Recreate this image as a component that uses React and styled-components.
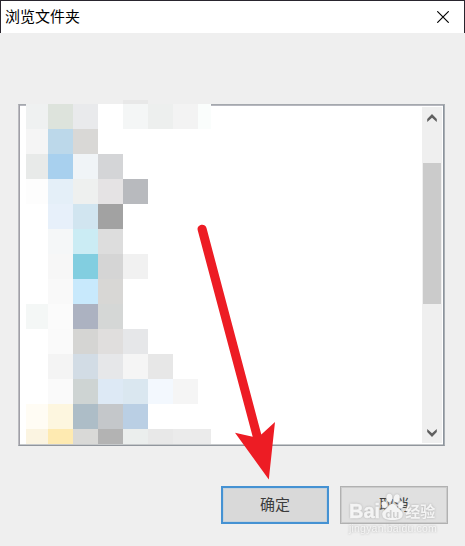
import styled, { createGlobalStyle } from "styled-components";

const MOSAIC = [
  ["#eff1f1", "#dde3dc", "#e9eaec", "#fff", "#f4f6f6", "#edefee", "#f3f3f3", "#fafdfc"],
  ["#f5f5f5", "#bcd8ea", "#d9d8d6"],
  ["#e8eae9", "#a8d0ee", "#f0f4f7", "#d4d5d7"],
  ["#fdfdfd", "#e4eff8", "#eef0ef", "#e5e3e4", "#b8babe"],
  [null, "#e7f0fa", "#d1e5f0", "#a2a2a2"],
  [null, "#f5f7f8", "#cbecf4", "#dddddd"],
  [null, "#f7f7f7", "#82cee0", "#d5d5d5", "#f1f1f1"],
  [null, "#f9f9f9", "#c8e9fc", "#d8d7d5"],
  ["#f4f7f6", "#fbfbfb", "#acb2c1", "#d5d7d6"],
  [null, "#fafafa", "#d5d5d3", "#e0dedd", "#e6e7e9"],
  [null, "#f4f4f4", "#d2dce5", "#e6e7e9", "#f5f5f5", "#e7e7e7"],
  [null, "#fafafa", "#ced4d3", "#dde9f5", "#dae7f0", "#f3f8fe", "#f5f5f5"],
  ["#fffcf4", "#fdf6df", "#adbdc7", "#c4c7ca", "#bacfe4"],
  ["#fbf4e1", "#feeab1", "#d9d9d7", "#b3b3b3", "#ebeeed", "#e8e8e8", "#ebebeb", "#ebebeb"],
];

export default function App() {
  return (
    <>
      <GlobalStyle />
      <Dialog>
        <TitleBar>
          <Title>浏览文件夹</Title>
          <CloseButton aria-label="关闭">
            <svg width="12" height="12" viewBox="0 0 12 12">
              <path d="M.3 .3 11.7 11.7M11.7 .3.3 11.7" stroke="#000" strokeWidth="1.15" />
            </svg>
          </CloseButton>
        </TitleBar>
        <Body>
          <FolderTree>
            <Mosaic>
              {MOSAIC.map((row, y) =>
                row.map((color, x) =>
                  color && <Block key={`${x}-${y}`} $color={color} $col={x + 1} $row={y + 1} />
                )
              )}
              <Sliver />
            </Mosaic>
            <ScrollBar>
              <Chevron />
              <Thumb />
              <Chevron $down />
            </ScrollBar>
          </FolderTree>
          <Actions>
            <Button $primary>确定</Button>
            <Button>
              取消
              <Watermark />
            </Button>
          </Actions>
        </Body>
        <Arrow width="465" height="546" viewBox="0 0 465 546">
          <path
            d="M197.7 230.3C196.3 224.5 205 222.5 206.5 228L261.3 434.5 275 422 268.8 479.5 235 432.8 252.7 436.7Z"
            fill="#ed1c24"
          />
        </Arrow>
      </Dialog>
    </>
  );
}

function Chevron({ $down }) {
  return (
    <ChevronBox $down={$down}>
      <svg width="10" height="8" viewBox="0 0 10 8">
        <path d="M5 0 9.8 4.9V8L5 3.8.2 8V4.9Z" fill="#606060" />
      </svg>
    </ChevronBox>
  );
}

function Watermark() {
  return (
    <Mark>
      <Brand>
        <span>Bai</span>
        <Paw width="23" height="28" viewBox="0 0 22 29" preserveAspectRatio="none">
          <g fill="currentColor">
            <ellipse cx="3.2" cy="12" rx="2.5" ry="3.5" transform="rotate(-12 3.2 12)" />
            <ellipse cx="8" cy="5" rx="2.8" ry="4.3" />
            <ellipse cx="15" cy="5.5" rx="2.8" ry="4.2" transform="rotate(8 15 5.5)" />
            <ellipse cx="19" cy="12.5" rx="2.5" ry="3.5" transform="rotate(10 19 12.5)" />
            <path d="M11 11.5c3 0 3.6 2.5 5.7 4.6 2.2 2.1 4.4 3.1 4.1 6.5-.3 4-3.5 5.4-9.8 5.4S1.5 26.6 1.2 22.6c-.3-3.4 1.9-4.4 4.1-6.5C7.4 14 8 11.5 11 11.5Z" />
          </g>
          <text x="4" y="25.5" fontFamily="Liberation Sans, sans-serif" fontWeight="700" fontSize="11" fill="#cfcfcf">
            du
          </text>
        </Paw>
        <Experience>经验</Experience>
      </Brand>
      <Domain>jingyan.baidu.com</Domain>
    </Mark>
  );
}

const GlobalStyle = createGlobalStyle`
  * {
    box-sizing: border-box;
  }

  body {
    margin: 0;
    overflow: hidden;
    font-family: "Noto Sans CJK SC", sans-serif;
  }
`;

const Dialog = styled.div`
  position: relative;
  display: flex;
  flex-direction: column;
  width: 465px;
  height: 546px;
  background: #efefef;
`;

const TitleBar = styled.header`
  display: flex;
  align-items: center;
  justify-content: space-between;
  height: 33px;
  padding: 0 15px 0 4px;
  border: 1px solid #29252e;
  border-bottom: 0;
  background: #fff;
`;

const Title = styled.h1`
  margin: 0;
  padding-bottom: 2px;
  font-size: 15px;
  font-weight: 400;
  line-height: 30px;
  color: #000;
`;

const CloseButton = styled.button`
  display: flex;
  padding: 0;
  border: 0;
  background: none;
`;

const Body = styled.main`
  display: flex;
  flex-direction: column;
  gap: 40px;
  padding: 71px 17px 0 18px;
`;

const FolderTree = styled.section`
  position: relative;
  display: flex;
  justify-content: flex-end;
  width: 427px;
  height: 342px;
  padding-right: 1px;
  border: 1px solid;
  border-color: #a4a8ad #a9aeb3 #91969d #bbbbc0;
  background: #fff;
  box-shadow: inset 1px 0 #a09fa7, inset -1px 0 #8c949d, inset 0 1px #b6b7bf,
    inset 0 -1px #c6c9cb;
`;

// Covers the folder names, including part of the frame's top edge
const Mosaic = styled.div`
  position: absolute;
  top: -1px;
  left: 7px;
  display: grid;
  grid-template-columns: 22px repeat(6, 25px) 13px;
  grid-template-rows: repeat(13, 25px) 15px;
  background: #fff;
`;

const Block = styled.div`
  grid-column: ${(p) => p.$col};
  grid-row: ${(p) => p.$row};
  background: ${(p) => p.$color};
`;

const Sliver = styled.div`
  position: absolute;
  top: -4px;
  left: 97px;
  width: 25px;
  height: 4px;
  background: #e8e8e8;
`;

const ScrollBar = styled.div`
  display: flex;
  flex-direction: column;
  width: 20px;
  margin: 2px 1px 2px 0;
  padding: 0 1px;
  background: #efefef;
`;

const ChevronBox = styled.div`
  display: flex;
  flex: none;
  justify-content: center;
  padding-top: ${(p) => (p.$down ? 6 : 7)}px;
  transform: ${(p) => (p.$down ? "rotate(180deg)" : "none")};
`;

const Thumb = styled.div`
  flex: none;
  height: 141px;
  margin: 41px 0 125px;
  background: #cbcbcb;
`;

const Actions = styled.footer`
  display: flex;
  justify-content: flex-end;
  gap: 11px;
`;

const Button = styled.button`
  position: relative;
  width: 108px;
  height: 38px;
  padding: 0 0 2px;
  border: ${(p) => (p.$primary ? "2px solid #4592d3" : "1px solid #b1b1b1")};
  background: ${(p) => (p.$primary ? "#d9d9d9" : "#e0e0e0")};
  box-shadow: inset 0 0 0 1px ${(p) => (p.$primary ? "#c5d2dc" : "#cbcbcb")};
  font-family: inherit;
  font-size: 15px;
  line-height: 32px;
  color: #3c3c3c;
`;

const Mark = styled.div`
  position: absolute;
  top: 6px;
  left: 8px;
  display: flex;
  flex-direction: column;
  white-space: nowrap;
  color: #f4f4f4;
  filter: drop-shadow(0 0 0.8px #b0b0b0);
`;

const Brand = styled.div`
  display: flex;
  align-items: flex-end;
  height: 28px;
  font: 700 20px/20px "Liberation Sans", sans-serif;
  -webkit-text-stroke: 0.4px;
`;

const Paw = styled.svg`
  margin-left: 1px;
  -webkit-text-stroke: 0;
`;

const Experience = styled.span`
  margin-left: 1px;
  font: 700 15px/20px "Noto Sans CJK SC", sans-serif;
  -webkit-text-stroke: 0;
`;

const Domain = styled.span`
  margin-top: 1px;
  height: 12px;
  font: 10.5px/12px "Liberation Sans", sans-serif;
  letter-spacing: 0.2px;
  text-align: left;
`;

const Arrow = styled.svg`
  position: absolute;
  top: 0;
  left: 0;
  pointer-events: none;
`;
